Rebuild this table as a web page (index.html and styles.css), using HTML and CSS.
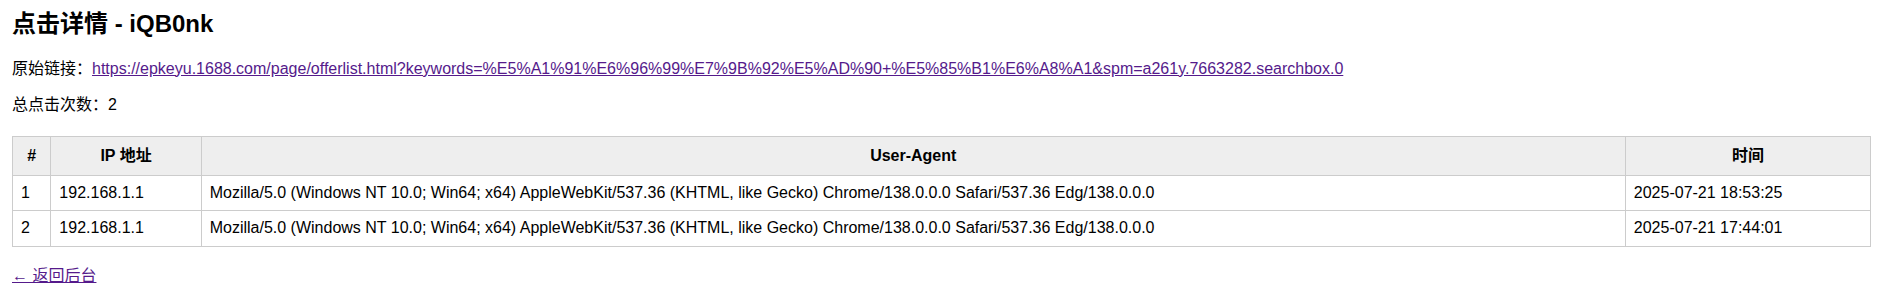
FILE: index.html
```html
<!DOCTYPE html>
<html lang="zh-CN">
<head>
<meta charset="utf-8">
<title>点击详情 - iQB0nk</title>
<link rel="stylesheet" href="styles.css">
</head>
<body>
<h2 class="title">点击详情 - iQB0nk</h2>
<p class="line">原始链接：<a class="link" href="#">https://epkeyu.1688.com/page/offerlist.html?keywords=%E5%A1%91%E6%96%99%E7%9B%92%E5%AD%90+%E5%85%B1%E6%A8%A1&amp;spm=a261y.7663282.searchbox.0</a></p>
<p class="line">总点击次数：2</p>
<table class="clicks">
  <thead>
    <tr><th>#</th><th>IP 地址</th><th>User-Agent</th><th>时间</th></tr>
  </thead>
  <tbody>
    <tr><td>1</td><td>192.168.1.1</td><td>Mozilla/5.0 (Windows NT 10.0; Win64; x64) AppleWebKit/537.36 (KHTML, like Gecko) Chrome/138.0.0.0 Safari/537.36 Edg/138.0.0.0</td><td>2025-07-21 18:53:25</td></tr>
    <tr><td>2</td><td>192.168.1.1</td><td>Mozilla/5.0 (Windows NT 10.0; Win64; x64) AppleWebKit/537.36 (KHTML, like Gecko) Chrome/138.0.0.0 Safari/537.36 Edg/138.0.0.0</td><td>2025-07-21 17:44:01</td></tr>
  </tbody>
</table>
<p class="line back"><a class="link" href="#">← 返回后台</a></p>
</body>
</html>
```
FILE: styles.css
```css
html, body {
  background: #fff;
}
body {
  margin: 0;
  padding: 8px 12px 0;
  font-family: "Liberation Sans", Arial, "Noto Sans CJK SC", sans-serif;
  font-size: 16px;
  color: #000;
}
.title {
  font-size: 24px;
  font-weight: bold;
  line-height: 32px;
  margin: 0 0 18.5px;
}
.line {
  line-height: 20.5px;
  margin: 16px 0;
}
.link {
  color: #551a8b;
  text-decoration: underline;
}
.clicks {
  width: 100%;
  border-collapse: collapse;
  margin: 20px 0 19px;
}
.clicks th,
.clicks td {
  border: 1px solid #ccc;
  padding: 8px;
  line-height: 18.4px;
}
.clicks th {
  background: #eee;
  font-weight: bold;
  text-align: center;
  padding: 10px 8px;
}
.clicks td {
  text-align: left;
}
```
